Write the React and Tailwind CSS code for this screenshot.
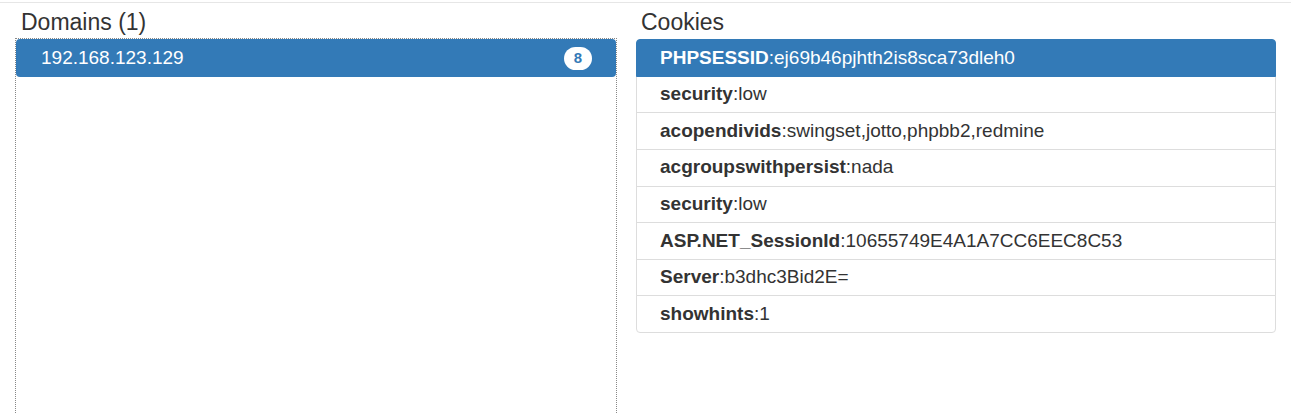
import React from 'react';

const cookies = [
  { name: 'PHPSESSID', value: 'ej69b46pjhth2is8sca73dleh0', active: true },
  { name: 'security', value: 'low' },
  { name: 'acopendivids', value: 'swingset,jotto,phpbb2,redmine' },
  { name: 'acgroupswithpersist', value: 'nada' },
  { name: 'security', value: 'low' },
  { name: 'ASP.NET_SessionId', value: '10655749E4A1A7CC6EEC8C53' },
  { name: 'Server', value: 'b3dhc3Bid2E=' },
  { name: 'showhints', value: '1' },
];

export default function App() {
  return (
    <div className="h-[414px] overflow-hidden bg-white text-[#333] font-['Liberation_Sans',Arial,sans-serif]">
      <div className="mt-[2px] h-px bg-[#e6e6e6]" />

      <div className="flex h-[430px]">
        {/* Domains column */}
        <div className="flex w-[617px] flex-col pl-[15px]">
          <h4 className="h-[35px] pl-[6px] pt-[6px] text-[23px] leading-[26px] font-normal">Domains (1)</h4>
          <div className="flex-1 border border-dotted border-[#888]">
            <div className="flex h-[38px] items-center justify-between rounded-[4px] bg-[#337ab7] pl-[25px] pr-[24px] text-[19px] text-white">
              <span>192.168.123.129</span>
              <span className="flex h-[23px] min-w-[28px] items-center justify-center rounded-full bg-white px-[8px] text-[15px] font-bold text-[#337ab7]">
                8
              </span>
            </div>
          </div>
        </div>

        {/* Cookies column */}
        <div className="ml-[19px] flex w-[640px] flex-col">
          <h4 className="h-[36px] pl-[5px] pt-[6px] text-[23px] leading-[26px] font-normal">Cookies</h4>
          <ul className="flex flex-col">
            {cookies.map((c, i) => (
              <li
                key={i}
                className={
                  'flex h-[37.625px] items-center border pl-[23px] text-[19px] ' +
                  (i > 0 ? '-mt-px ' : '') +
                  (i === 0 ? 'rounded-t-[4px] ' : '') +
                  (i === cookies.length - 1 ? 'rounded-b-[4px] ' : '') +
                  (c.active
                    ? 'relative z-10 border-[#337ab7] bg-[#337ab7] text-white'
                    : 'border-[#ddd] bg-white text-[#333]')
                }
              >
                <b className="font-bold">{c.name}</b>:{c.value}
              </li>
            ))}
          </ul>
        </div>
      </div>
    </div>
  );
}
